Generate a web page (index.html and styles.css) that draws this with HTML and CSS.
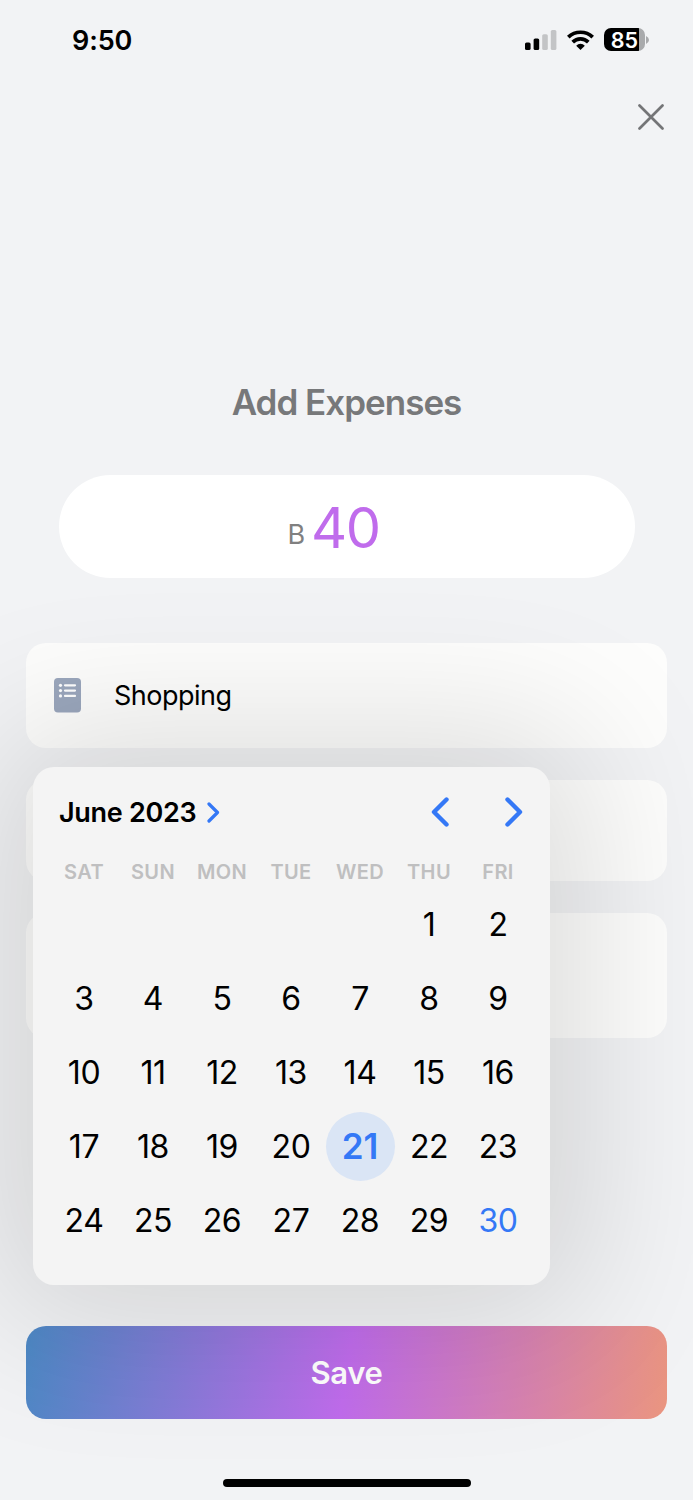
FILE: index.html
```html
<!DOCTYPE html>
<html lang="en">
<head>
<meta charset="utf-8">
<title>Add Expenses</title>
<link rel="stylesheet" href="styles.css">
</head>
<body>
<main class="screen">
  <header class="status">
    <span class="clock">9:50</span>
    <div class="indicators">
      <svg class="signal" width="32" height="20" viewBox="0 0 32 20">
        <rect x="0" y="12.5" width="5.6" height="7.5" rx="1.6" fill="#000"/>
        <rect x="8.6" y="8.5" width="5.6" height="11.5" rx="1.6" fill="#000"/>
        <rect x="17.2" y="4.2" width="5.6" height="15.8" rx="1.6" fill="#c3c4c6"/>
        <rect x="25.8" y="0" width="5.6" height="20" rx="1.6" fill="#c3c4c6"/>
      </svg>
      <svg class="wifi" width="27" height="20" viewBox="0 0 27 20" fill="none" stroke="#000" stroke-width="3.7">
        <path d="M1.3 7.2A17.5 17.5 0 0 1 25.7 7.2"/>
        <path d="M5.7 12.1A11 11 0 0 1 21.3 12.1"/>
        <path d="M13.5 20L9.2 15.7A5.8 5.8 0 0 1 17.8 15.7Z" fill="#000" stroke="none"/>
      </svg>
      <div class="battery"><span class="battery-level">85</span></div>
      <svg class="battery-tip" width="3" height="8" viewBox="0 0 3 8"><path d="M0 0Q3 1.5 3 4T0 8Z" fill="#a9aaac"/></svg>
    </div>
  </header>
  <div class="close-row">
    <svg width="26" height="26" viewBox="0 0 26 26" fill="none" stroke="#747577" stroke-width="2.7" stroke-linecap="round"><path d="M1.5 1.5L24.5 24.5M24.5 1.5L1.5 24.5"/></svg>
  </div>
  <h1 class="title">Add Expenses</h1>
  <div class="amount"><span class="currency">B</span><span class="value">40</span></div>
  <section class="fields">
    <div class="field category">
      <svg width="27" height="35" viewBox="0 0 27 35">
        <rect width="27" height="34.5" rx="4" fill="#9ba7bd"/>
        <g fill="#fff"><circle cx="6.5" cy="7.3" r="1.6"/><circle cx="6.5" cy="12.6" r="1.6"/><circle cx="6.5" cy="17.9" r="1.6"/></g>
        <path d="M11 7.3H21M11 12.6H21M11 17.9H21" stroke="#fff" stroke-width="2.2" stroke-linecap="round"/>
      </svg>
      <span class="category-name">Shopping</span>
    </div>
    <div class="field date"></div>
    <div class="field note"></div>
    <div class="calendar">
      <div class="cal-head">
        <span class="month">June 2023</span>
        <svg class="month-arrow" width="13" height="21" viewBox="0 0 13 21"><path d="M2 2L10.5 10.5L2 19"/></svg>
        <svg class="prev" width="18" height="30" viewBox="0 0 18 30"><path d="M15.5 2.5L3 15L15.5 27.5"/></svg>
        <svg class="next" width="18" height="30" viewBox="0 0 18 30"><path d="M2.5 2.5L15 15L2.5 27.5"/></svg>
      </div>
      <div class="weekdays"><span>SAT</span><span>SUN</span><span>MON</span><span>TUE</span><span>WED</span><span>THU</span><span>FRI</span></div>
      <div class="days">
        <span class="first">1</span><span>2</span>
        <span>3</span><span>4</span><span>5</span><span>6</span><span>7</span><span>8</span><span>9</span>
        <span>10</span><span>11</span><span>12</span><span>13</span><span>14</span><span>15</span><span>16</span>
        <span>17</span><span>18</span><span>19</span><span>20</span><span class="selected">21</span><span>22</span><span>23</span>
        <span>24</span><span>25</span><span>26</span><span>27</span><span>28</span><span>29</span><span class="today">30</span>
      </div>
    </div>
  </section>
  <button class="save">Save</button>
  <div class="home"></div>
</main>
</body>
</html>
```
FILE: styles.css
```css
* { box-sizing: border-box; }
body { margin: 0; background: #f2f3f5; }
svg { display: block; flex: none; }
.screen {
  width: 693px; height: 1500px; overflow: hidden;
  display: flex; flex-direction: column; align-items: center;
  background: #f2f3f5; color: #000;
  font-family: Inter, "Liberation Sans", sans-serif;
}
.status { width: 100%; height: 79px; padding: 0 44px 0 72px; display: flex; align-items: center; justify-content: space-between; flex: none; }
.clock { font-size: 27px; font-weight: 600; line-height: 34px; letter-spacing: -0.1px; padding-top: 2px; }
.indicators { display: flex; align-items: center; }
.wifi { margin-left: 10px; }
.battery {
  width: 41px; height: 23px; margin-left: 10px; border-radius: 7px;
  background: linear-gradient(90deg, #000 85%, #a9aaac 85%);
}
.battery-level { display: block; text-align: center; color: #fff; font-size: 21.5px; line-height: 24px; font-weight: 600; }
.battery-tip { margin-left: 1px; }
.close-row { width: 100%; padding: 25px 29.5px 0 0; display: flex; justify-content: flex-end; }
.title { margin: 250px 0 0; font-size: 35px; line-height: 44px; font-weight: 600; color: #77787a; letter-spacing: -1px; }
.amount { width: 576px; height: 103px; flex: none; margin-top: 51px; padding: 2px 26px 0 0; border-radius: 52px; background: #fff; display: flex; align-items: baseline; justify-content: center; line-height: 103px; }
.currency { font-size: 27px; color: #808080; transform: translateY(-4px); }
.value { margin-left: 6px; font-size: 56px; color: #c06cec; letter-spacing: -1.5px; }
.fields { position: relative; width: 641px; margin-top: 65px; flex: none; }
.field { border-radius: 20px; background: #fdfdfc; }
.category { height: 105px; display: flex; align-items: center; padding: 0 28px; }
.category-name { margin-left: 33px; font-size: 27px; letter-spacing: -0.5px; }
.date { height: 101px; margin-top: 32px; }
.note { height: 125px; margin-top: 32px; }
.calendar {
  position: absolute; left: 7px; top: 124px; width: 517px; height: 518px;
  padding: 25px 17px 25px 16.5px; border-radius: 21px; background: #f4f4f4; z-index: 1;
  box-shadow: 0 0 150px 38px rgba(0, 0, 0, 0.13);
}
.cal-head { height: 40px; padding: 0 10px 0 9.5px; display: flex; align-items: center; }
.cal-head path { fill: none; stroke: #3478f6; stroke-width: 4.4; stroke-linecap: round; stroke-linejoin: round; }
.cal-head .month-arrow path { stroke-width: 3.2; }
.month { font-size: 27px; font-weight: 600; letter-spacing: -0.3px; }
.month-arrow { margin-left: 11px; }
.prev { margin-left: auto; }
.next { margin-left: 56px; }
.weekdays, .days { display: grid; grid-template-columns: repeat(7, 69px); justify-items: center; align-items: center; }
.weekdays { height: 30px; margin-top: 25px; font-size: 20px; font-weight: 600; color: #bfbfc0; letter-spacing: 0.4px; }
.days { grid-auto-rows: 74px; margin-top: 0; font-size: 32px; letter-spacing: -0.4px; }
.first { grid-column: 6; }
.selected { width: 69px; height: 69px; border-radius: 50%; background: #dae5f5; color: #3478f6; font-size: 35px; font-weight: 600; line-height: 69px; letter-spacing: 0; text-align: center; }
.today { color: #3478f6; }
.save {
  width: 641px; height: 93px; flex: none; margin-top: 288px;
  padding: 0; border: 0; border-radius: 20px; color: #fff;
  background: linear-gradient(98.3deg, #4d89c5, #c06cec 50%, #ea957f);
  font: 600 31px/93px Inter, "Liberation Sans", sans-serif; letter-spacing: -0.3px;
}
.home { width: 248px; height: 8px; flex: none; margin-top: 60px; border-radius: 4px; background: #000; }
```
